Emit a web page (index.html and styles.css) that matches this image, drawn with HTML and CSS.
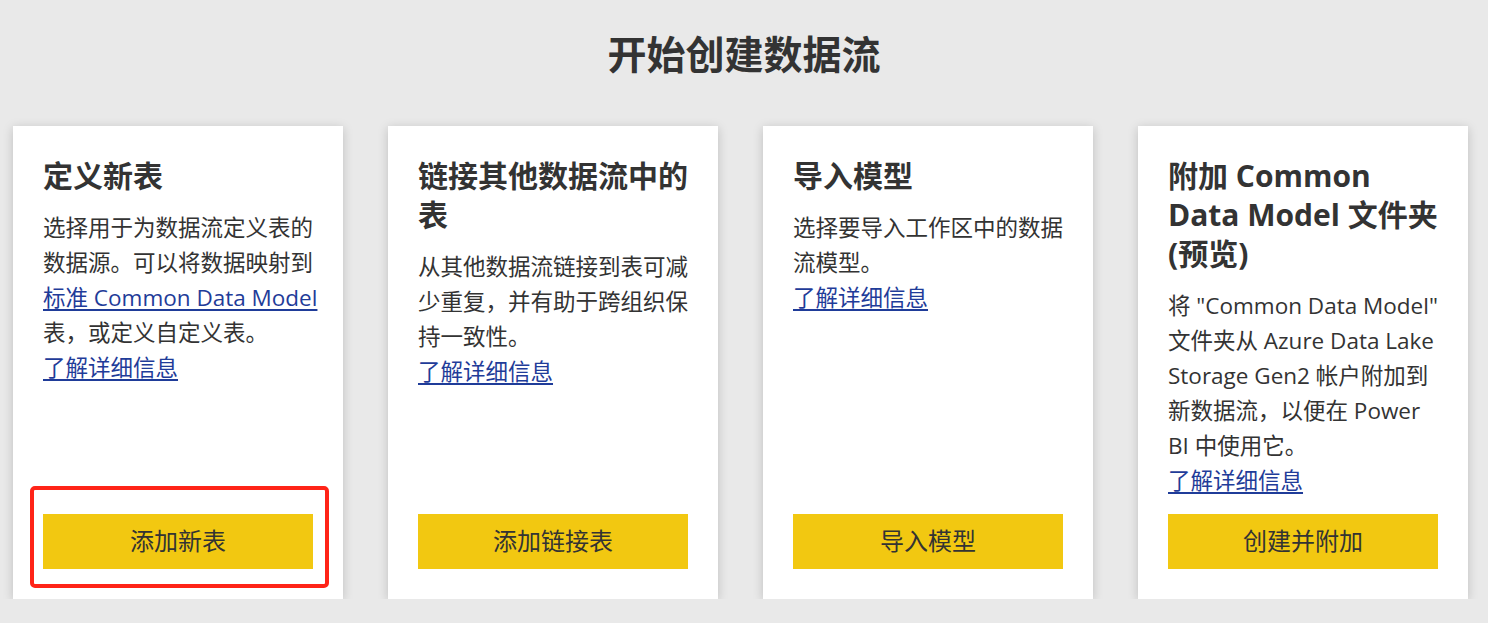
FILE: index.html
```html
<!DOCTYPE html>
<html lang="zh-CN">
<head>
<meta charset="utf-8">
<title>开始创建数据流</title>
<link rel="stylesheet" href="styles.css">
</head>
<body>
<main class="page">
  <h1 class="page-title">开始创建数据流</h1>
  <div class="cards">
    <section class="card">
      <h2 class="card-title">定义新表</h2>
      <p class="card-text">选择用于为数据流定义表的<br>数据源。可以将数据映射到<br><a class="link" href="#">标准 Common Data Model</a><br>表，或定义自定义表。<br><a class="link" href="#">了解详细信息</a></p>
      <div class="btn-wrap highlighted">
        <button class="btn">添加新表</button>
        <span class="highlight-box"></span>
      </div>
    </section>
    <section class="card">
      <h2 class="card-title">链接其他数据流中的<br>表</h2>
      <p class="card-text">从其他数据流链接到表可减<br>少重复，并有助于跨组织保<br>持一致性。<br><a class="link" href="#">了解详细信息</a></p>
      <div class="btn-wrap">
        <button class="btn">添加链接表</button>
      </div>
    </section>
    <section class="card">
      <h2 class="card-title">导入模型</h2>
      <p class="card-text">选择要导入工作区中的数据<br>流模型。<br><a class="link" href="#">了解详细信息</a></p>
      <div class="btn-wrap">
        <button class="btn">导入模型</button>
      </div>
    </section>
    <section class="card">
      <h2 class="card-title">附加 Common<br>Data Model 文件夹<br>(预览)</h2>
      <p class="card-text">将 "Common Data Model"<br>文件夹从 Azure Data Lake<br>Storage Gen2 帐户附加到<br>新数据流，以便在 Power<br>BI 中使用它。<br><a class="link" href="#">了解详细信息</a></p>
      <div class="btn-wrap">
        <button class="btn">创建并附加</button>
      </div>
    </section>
  </div>
</main>
</body>
</html>
```
FILE: styles.css
```css
* { box-sizing: border-box; }
html, body {
  margin: 0;
  padding: 0;
  background: #e9e9e9;
}
body {
  font-family: "Segoe UI", "Open Sans", "Noto Sans CJK SC", sans-serif;
  color: #333333;
}
.page {
  padding: 28px 20px 0 13px;
}
.page-title {
  margin: 0;
  text-align: center;
  font-size: 39px;
  line-height: 52px;
  font-weight: 700;
  color: #333333;
  padding-left: 7px;
}
.cards {
  margin-top: 46px;
  display: grid;
  grid-template-columns: repeat(4, 330px);
  column-gap: 45px;
}
.card {
  background: #ffffff;
  box-shadow: 0 2px 10px rgba(0, 0, 0, 0.18);
  padding: 30px;
  display: flex;
  flex-direction: column;
  height: 473px;
}
.card-title {
  margin: 0;
  font-size: 30px;
  line-height: 39px;
  font-weight: 700;
  color: #333333;
}
.card-text {
  margin: 15px 0 0;
  font-size: 22.5px;
  line-height: 35px;
  color: #333333;
  white-space: nowrap;
}
.link {
  color: #1f3c99;
  text-decoration: underline;
  text-underline-offset: 3px;
}
.btn-wrap {
  margin-top: auto;
  position: relative;
}
.btn {
  display: block;
  width: 100%;
  height: 55px;
  border: none;
  background: #f2c811;
  color: #333333;
  font-family: inherit;
  font-size: 24px;
  padding: 0 0 5px;
}
.highlight-box {
  position: absolute;
  left: -13px;
  right: -16px;
  top: -28px;
  bottom: -19px;
  border: 4px solid #ff2418;
  border-radius: 5px;
  pointer-events: none;
}
```
